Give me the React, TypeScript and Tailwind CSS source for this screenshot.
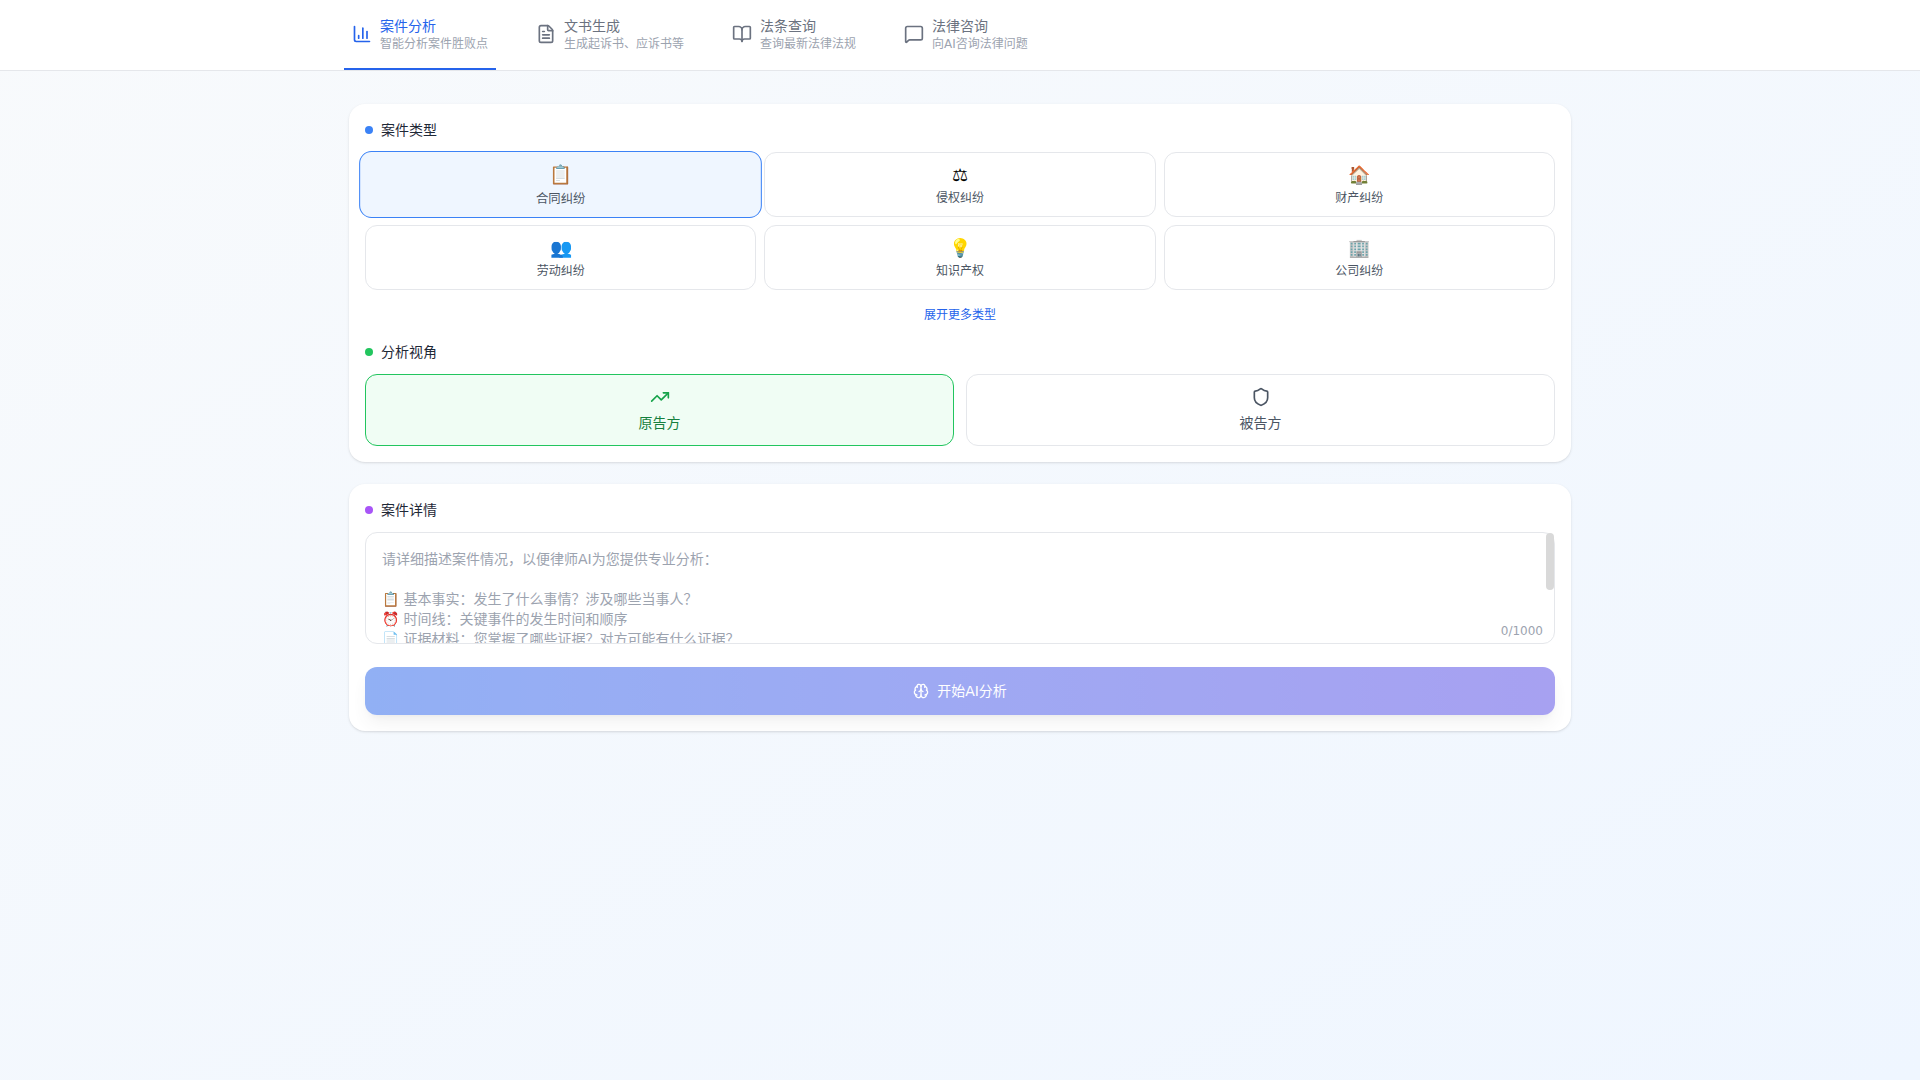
import { ChartColumn, FileText, BookOpen, MessageSquare, TrendingUp, Shield, Brain } from "lucide-react";

const font = "font-['DejaVu_Sans','Noto_Sans_CJK_SC',sans-serif]";

const tabs = [
  { title: "案件分析", sub: "智能分析案件胜败点", Icon: ChartColumn, active: true },
  { title: "文书生成", sub: "生成起诉书、应诉书等", Icon: FileText, active: false },
  { title: "法条查询", sub: "查询最新法律法规", Icon: BookOpen, active: false },
  { title: "法律咨询", sub: "向AI咨询法律问题", Icon: MessageSquare, active: false },
];

const types = [
  { icon: "📋", label: "合同纠纷", active: true },
  { icon: "⚖", label: "侵权纠纷", active: false },
  { icon: "🏠", label: "财产纠纷", active: false },
  { icon: "👥", label: "劳动纠纷", active: false },
  { icon: "💡", label: "知识产权", active: false },
  { icon: "🏢", label: "公司纠纷", active: false },
];

const detailHint = `请详细描述案件情况，以便律师AI为您提供专业分析：

📋 基本事实：发生了什么事情？涉及哪些当事人？
⏰ 时间线：关键事件的发生时间和顺序
📄 证据材料：您掌握了哪些证据？对方可能有什么证据？
🎯 争议焦点：双方的主要分歧是什么？
💰 诉讼请求：您希望达到什么样的结果？
📍 管辖地区：案件发生地或当事人所在地
📝 其他情况：其他需要说明的内容`;

function SectionTitle({ dot, children }: { dot: string; children: string }) {
  return (
    <div className="flex items-center gap-2 mb-3 h-5">
      <span className={`w-2 h-2 rounded-full ${dot}`} />
      <span className="text-sm leading-5 text-[#1f2937]">{children}</span>
    </div>
  );
}

export default function App() {
  return (
    <div className={`min-h-screen bg-gradient-to-br from-[#f8fafc] to-[#eff6ff] ${font}`}>
      <header className="h-[71px] bg-white border-b border-[#e5e7eb]">
        <nav className="flex gap-8 pl-[344px] h-[70px]">
          {tabs.map(({ title, sub, Icon, active }) => (
            <div
              key={title}
              className={`flex items-center gap-2 px-2 h-[70px] border-b-2 ${active ? "border-[#2563eb]" : "border-transparent"}`}
            >
              <Icon className={`w-5 h-5 ${active ? "text-[#2563eb]" : "text-[#6b7280]"}`} />
              <div className="flex flex-col">
                <span className={`text-sm leading-5 ${active ? "text-[#2563eb]" : "text-[#6b7280]"}`}>{title}</span>
                <span className="text-xs leading-4 text-[#9ca3af]">{sub}</span>
              </div>
            </div>
          ))}
        </nav>
      </header>

      <main className="w-[1222px] mx-auto pt-[33px] flex flex-col gap-[22px]">
        <section className="bg-white rounded-2xl shadow-sm p-4">
          <SectionTitle dot="bg-[#3b82f6]">案件类型</SectionTitle>
          <div className="grid grid-cols-3 gap-2">
            {types.map((t) => (
              <button
                key={t.label}
                className={`h-[65px] pt-3 flex flex-col items-center gap-[5px] rounded-xl border ${
                  t.active ? "border-[#3b82f6] bg-[#eff6ff] scale-[1.03]" : "border-[#e5e7eb] bg-white"
                }`}
              >
                <span className="text-lg leading-5">{t.icon}</span>
                <span className="text-xs leading-4 text-[#4b5563]">{t.label}</span>
              </button>
            ))}
          </div>
          <div className="mt-[17px] mb-[19px] text-center text-xs leading-4 text-[#2563eb]">展开更多类型</div>
          <SectionTitle dot="bg-[#22c55e]">分析视角</SectionTitle>
          <div className="grid grid-cols-2 gap-3">
            <button className="h-[72px] flex flex-col items-center justify-center gap-1.5 rounded-xl border border-[#22c55e] bg-[#f0fdf4]">
              <TrendingUp className="w-5 h-5 text-[#16a34a]" />
              <span className="text-sm leading-5 text-[#15803d]">原告方</span>
            </button>
            <button className="h-[72px] flex flex-col items-center justify-center gap-1.5 rounded-xl border border-[#e5e7eb] bg-white">
              <Shield className="w-5 h-5 text-[#4b5563]" />
              <span className="text-sm leading-5 text-[#4b5563]">被告方</span>
            </button>
          </div>
        </section>

        <section className="bg-white rounded-2xl shadow-sm p-4">
          <SectionTitle dot="bg-[#a855f7]">案件详情</SectionTitle>
          <div className="relative">
            <textarea
              readOnly
              value={detailHint}
              className={`block w-full h-28 resize-none rounded-xl border border-[#e5e7eb] px-4 py-4 text-sm leading-5 text-[#9ca3af] outline-none overflow-hidden ${font}`}
            />
            <span className="absolute top-px right-px w-2 h-[57px] rounded bg-[#d9d9d9]" />
            <span className="absolute right-3 bottom-[5px] text-xs leading-4 text-[#9ca3af]">0/1000</span>
          </div>
          <button className="mt-[23px] w-full h-12 flex items-center justify-center gap-2 rounded-xl text-sm text-white bg-gradient-to-r from-[#2563eb] to-[#5145e5] opacity-50 shadow-lg">
            <Brain className="w-4 h-4" />
            开始AI分析
          </button>
        </section>
      </main>
    </div>
  );
}
